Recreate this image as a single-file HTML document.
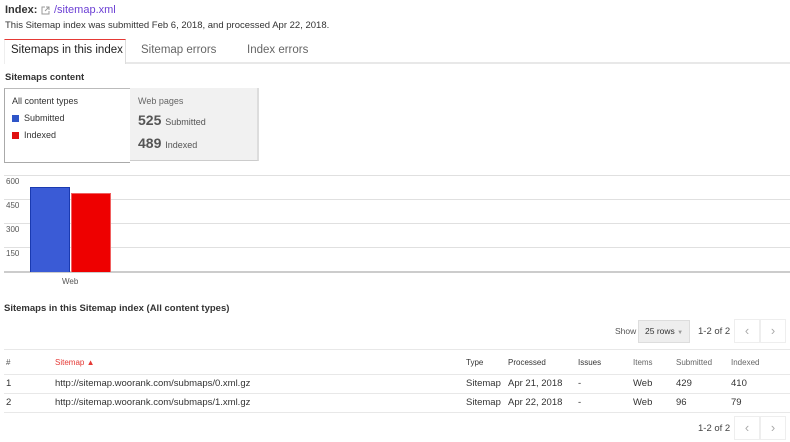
<!DOCTYPE html><html><head><style>
body{margin:0;width:790px;height:442px;overflow:hidden;background:#fff;font-family:"Liberation Sans",Arial,sans-serif;color:#222;position:relative}
.a{position:absolute;white-space:nowrap}
.g{position:absolute;left:4px;width:786px;height:1px;background:#e0e0e0}
.s{font-size:9px;color:#555}
.t{font-size:9.5px;color:#333}
.pb{position:absolute;width:24px;height:22px;border:1px solid #eee;color:#aaa;font-size:13px;text-align:center;line-height:21px}
</style></head><body>
<div class="a" style="left:5px;top:4px;font-size:11px;font-weight:bold;color:#333">Index:</div>
<svg class="a" style="left:41px;top:6px" width="9" height="9" viewBox="0 0 9 9"><path d="M4 1H1v7h7V5M5 1h3v3M8 1L4 5" stroke="#999" fill="none"/></svg>
<div class="a" style="left:54px;top:4px;font-size:11px;color:#6b3fd4">/sitemap.xml</div>
<div class="a" style="left:5px;top:20px;font-size:9.5px;color:#333">This Sitemap index was submitted Feb 6, 2018, and processed Apr 22, 2018.</div>
<div class="a" style="left:4px;top:39px;width:120px;height:24px;border-top:1px solid #e53935;border-right:1px solid #ddd;border-left:1px solid #eee;background:#fff;z-index:2"></div>
<div class="a" style="left:11px;top:44px;font-size:11.5px;color:#222;z-index:3">Sitemaps in this index</div>
<div class="a" style="left:141px;top:44px;font-size:11.5px;color:#666">Sitemap errors</div>
<div class="a" style="left:247px;top:44px;font-size:11.5px;color:#666">Index errors</div>
<div class="a" style="left:4px;top:62px;width:786px;height:2px;background:#e8e8e8"></div>
<div class="a" style="left:5px;top:72px;font-size:9.5px;font-weight:bold;color:#333">Sitemaps content</div>
<div class="a" style="left:4px;top:88px;width:125px;height:73px;border:1px solid #aaa;border-right:none;border-top:1px solid #bbb"></div>
<div class="a s" style="left:12px;top:96px;color:#333">All content types</div>
<div class="a" style="left:12px;top:115px;width:7px;height:7px;background:#2f55c8"></div>
<div class="a s" style="left:24px;top:113px;color:#333">Submitted</div>
<div class="a" style="left:12px;top:132px;width:7px;height:7px;background:#e01010"></div>
<div class="a s" style="left:24px;top:130px;color:#333">Indexed</div>
<div class="a" style="left:130px;top:88px;width:127px;height:72px;background:#f1f1f1;border-right:2px solid #ddd;border-bottom:1px solid #ccc"></div>
<div class="a s" style="left:138px;top:96px;color:#666">Web pages</div>
<div class="a" style="left:138px;top:112px;font-size:14px;font-weight:bold;color:#555">525 <span style="font-size:9px;font-weight:normal">Submitted</span></div>
<div class="a" style="left:138px;top:135px;font-size:14px;font-weight:bold;color:#555">489 <span style="font-size:9px;font-weight:normal">Indexed</span></div>
<div class="g" style="top:175px"></div><div class="g" style="top:199px"></div><div class="g" style="top:223px"></div><div class="g" style="top:247px"></div>
<div class="a" style="left:4px;top:271px;width:786px;height:2px;background:#ccc"></div>
<div class="a" style="left:6px;top:177px;font-size:8px;color:#555">600</div>
<div class="a" style="left:6px;top:201px;font-size:8px;color:#555">450</div>
<div class="a" style="left:6px;top:225px;font-size:8px;color:#555">300</div>
<div class="a" style="left:6px;top:249px;font-size:8px;color:#555">150</div>
<div class="a" style="left:30px;top:187px;width:38px;height:84px;background:#3a5bd6;border:1px solid #1a3ab0;border-bottom:none"></div>
<div class="a" style="left:71px;top:193px;width:38px;height:78px;background:#ee0000;border:1px solid #f06060;border-bottom:none"></div>
<div class="a" style="left:62px;top:277px;font-size:8px;color:#555">Web</div>
<div class="a" style="left:4px;top:303px;font-size:9.5px;font-weight:bold;color:#333">Sitemaps in this Sitemap index (All content types)</div>
<div class="a" style="left:615px;top:326px;font-size:8.5px;color:#555">Show</div>
<div class="a" style="left:638px;top:320px;width:50px;height:21px;background:#eee;border:1px solid #ddd;font-size:8.5px;line-height:21px;color:#333;text-indent:6px">25 rows <span style="color:#999;font-size:6px">▼</span></div>
<div class="a" style="left:698px;top:326px;font-size:9.5px;color:#444">1-2 of 2</div>
<div class="pb" style="left:734px;top:319px">‹</div><div class="pb" style="left:760px;top:319px">›</div>
<div class="a" style="left:4px;top:349px;width:786px;height:1px;background:#e8e8e8"></div>
<div class="a" style="left:4px;top:374px;width:786px;height:1px;background:#e8e8e8"></div>
<div class="a" style="left:4px;top:393px;width:786px;height:1px;background:#e8e8e8"></div>
<div class="a" style="left:4px;top:412px;width:786px;height:1px;background:#e8e8e8"></div>
<div class="a" style="left:6px;top:358px;font-size:8px;color:#555">#</div>
<div class="a" style="left:55px;top:358px;font-size:8px;color:#e53935">Sitemap ▲</div>
<div class="a" style="left:466px;top:358px;font-size:8px;color:#333">Type</div>
<div class="a" style="left:508px;top:358px;font-size:8px;color:#333">Processed</div>
<div class="a" style="left:578px;top:358px;font-size:8px;color:#333">Issues</div>
<div class="a" style="left:633px;top:358px;font-size:8px;color:#666">Items</div>
<div class="a" style="left:676px;top:358px;font-size:8px;color:#666">Submitted</div>
<div class="a" style="left:731px;top:358px;font-size:8px;color:#666">Indexed</div>
<div class="a t" style="left:6px;top:378px">1</div><div class="a t" style="left:55px;top:378px">http://sitemap.woorank.com/submaps/0.xml.gz</div><div class="a t" style="left:466px;top:378px">Sitemap</div><div class="a t" style="left:508px;top:378px">Apr 21, 2018</div><div class="a t" style="left:578px;top:378px">-</div><div class="a t" style="left:633px;top:378px">Web</div><div class="a t" style="left:676px;top:378px">429</div><div class="a t" style="left:731px;top:378px">410</div>
<div class="a t" style="left:6px;top:397px">2</div><div class="a t" style="left:55px;top:397px">http://sitemap.woorank.com/submaps/1.xml.gz</div><div class="a t" style="left:466px;top:397px">Sitemap</div><div class="a t" style="left:508px;top:397px">Apr 22, 2018</div><div class="a t" style="left:578px;top:397px">-</div><div class="a t" style="left:633px;top:397px">Web</div><div class="a t" style="left:676px;top:397px">96</div><div class="a t" style="left:731px;top:397px">79</div>
<div class="a" style="left:698px;top:423px;font-size:9.5px;color:#444">1-2 of 2</div>
<div class="pb" style="left:734px;top:416px">‹</div><div class="pb" style="left:760px;top:416px">›</div>
</body></html>
